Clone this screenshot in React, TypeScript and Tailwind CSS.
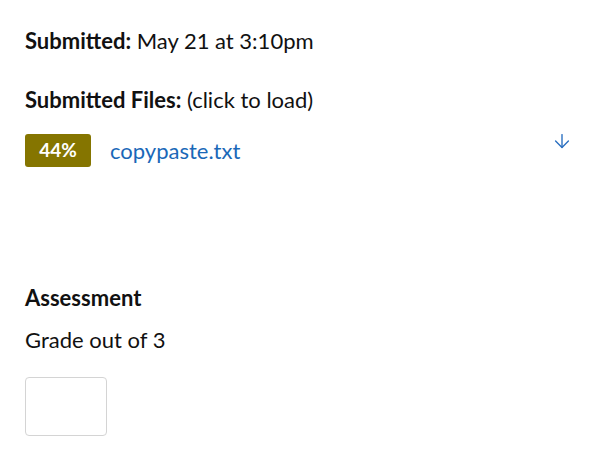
import { ArrowDown } from "lucide-react"

export default function App() {
  return (
    <div className="min-h-screen bg-white px-[25px] pt-[27px] text-[22px] text-[#111] font-['Lato',sans-serif]">
      <p className="leading-[28px]">
        <span className="font-bold">Submitted:</span> May 21 at 3:10pm
      </p>

      <p className="mt-[31px] leading-[28px]">
        <span className="font-bold">Submitted Files:</span> (click to load)
      </p>

      <div className="mt-[20px] flex items-center">
        <span className="flex h-[33px] w-[66px] items-center justify-center rounded-[3px] bg-[#857500] text-[19px] font-bold text-white">
          44%
        </span>
        <a href="#" className="ml-[19px] text-[#1a68b8]">
          copypaste.txt
        </a>
        <ArrowDown className="ml-auto mr-[11px] -mt-[20px] h-[22px] w-[22px] text-[#2a6fc0]" strokeWidth={1.5} />
      </div>

      <h3 className="mt-[117px] font-bold leading-[28px]">Assessment</h3>
      <p className="mt-[14px] leading-[28px]">Grade out of 3</p>
      <input
        type="text"
        className="mt-[23px] block h-[59px] w-[82px] rounded-[4px] border border-[#d4d4d4] outline-none"
      />
    </div>
  )
}
